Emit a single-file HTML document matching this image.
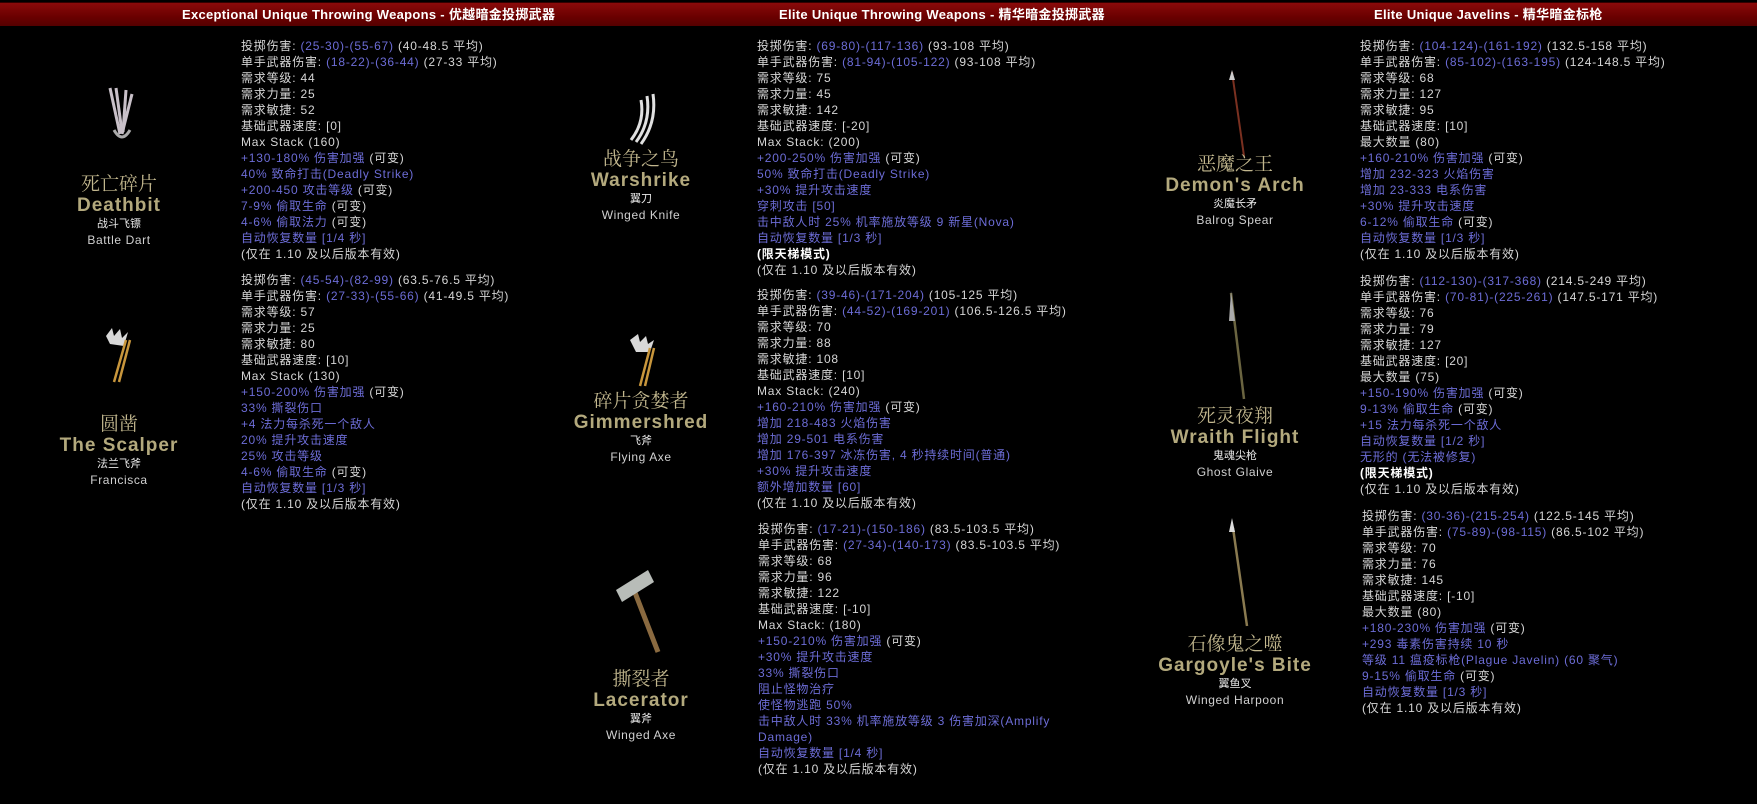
<!DOCTYPE html>
<html><head><meta charset="utf-8">
<style>
html,body{margin:0;padding:0;background:#000;width:1757px;height:804px;overflow:hidden;}
body{position:relative;font-family:"Liberation Sans","Noto Sans CJK SC",sans-serif;color:#d6d6d6;}
.hdr{position:absolute;left:0;top:2px;width:1757px;height:23px;background:linear-gradient(#8a0a0a,#6a0000 60%,#550000);border-top:1px solid #300;}
.ht{position:absolute;top:3px;height:23px;line-height:23px;color:#fff;font-weight:bold;font-size:13px;letter-spacing:0.3px;white-space:nowrap;}
.blk{position:absolute;font-size:12px;line-height:16px;letter-spacing:0.8px;white-space:nowrap;}
.b{color:#6c6cd6;}
.w{color:#fff;font-weight:bold;}
.nm{position:absolute;width:260px;text-align:center;white-space:nowrap;}
.nm .cn{font-family:"Noto Serif CJK SC","Liberation Serif",serif;font-size:19px;line-height:24px;color:#c2b78e;}
.nm .en{font-weight:bold;font-size:19px;letter-spacing:1px;line-height:22px;color:#b3a97d;}
.nm .tc{font-size:11px;line-height:14px;color:#e8e8e8;}
.nm .te{font-size:12px;letter-spacing:0.6px;line-height:18px;color:#d0d0d0;}
svg{position:absolute;}
</style></head><body>
<div class="hdr"></div>
<div class="ht" style="left:182px">Exceptional Unique Throwing Weapons - 优越暗金投掷武器</div>
<div class="ht" style="left:779px">Elite Unique Throwing Weapons - 精华暗金投掷武器</div>
<div class="ht" style="left:1374px">Elite Unique Javelins - 精华暗金标枪</div>

<!-- Column 1 -->
<svg style="left:104px;top:86px" width="32" height="58"><g stroke="#c8c0c8" stroke-width="3" fill="none"><path d="M6 2 L16 48"/><path d="M12 2 L18 46"/><path d="M28 8 L18 48"/><path d="M22 4 L19 46"/></g><path d="M10 44 Q18 58 26 44" stroke="#aaa" stroke-width="3" fill="none"/></svg>
<div class="nm" style="left:-11px;top:171px"><div class="cn">死亡碎片</div><div class="en">Deathbit</div><div class="tc">战斗飞镖</div><div class="te">Battle Dart</div></div>
<div class="blk" style="left:241px;top:38px">
投掷伤害: <span class="b">(25-30)-(55-67)</span> (40-48.5 平均)<br>
单手武器伤害: <span class="b">(18-22)-(36-44)</span> (27-33 平均)<br>
需求等级: 44<br>需求力量: 25<br>需求敏捷: 52<br>基础武器速度: [0]<br>Max Stack (160)<br>
<span class="b">+130-180% 伤害加强</span> (可变)<br>
<span class="b">40% 致命打击(Deadly Strike)</span><br>
<span class="b">+200-450 攻击等级</span> (可变)<br>
<span class="b">7-9% 偷取生命</span> (可变)<br>
<span class="b">4-6% 偷取法力</span> (可变)<br>
<span class="b">自动恢复数量 [1/4 秒]</span><br>
(仅在 1.10 及以后版本有效)</div>

<svg style="left:104px;top:326px" width="34" height="58"><path d="M2 10 L8 2 L10 10 L16 3 L18 12 L24 6 L20 20 L6 18 Z" fill="#d8d8d8"/><g stroke="#c8963c" stroke-width="2.5"><path d="M22 14 L10 56"/><path d="M26 14 L15 56"/></g></svg>
<div class="nm" style="left:-11px;top:411px"><div class="cn">圆凿</div><div class="en">The Scalper</div><div class="tc">法兰飞斧</div><div class="te">Francisca</div></div>
<div class="blk" style="left:241px;top:272px">
投掷伤害: <span class="b">(45-54)-(82-99)</span> (63.5-76.5 平均)<br>
单手武器伤害: <span class="b">(27-33)-(55-66)</span> (41-49.5 平均)<br>
需求等级: 57<br>需求力量: 25<br>需求敏捷: 80<br>基础武器速度: [10]<br>Max Stack (130)<br>
<span class="b">+150-200% 伤害加强</span> (可变)<br>
<span class="b">33% 撕裂伤口</span><br>
<span class="b">+4 法力每杀死一个敌人</span><br>
<span class="b">20% 提升攻击速度</span><br>
<span class="b">25% 攻击等级</span><br>
<span class="b">4-6% 偷取生命</span> (可变)<br>
<span class="b">自动恢复数量 [1/3 秒]</span><br>
(仅在 1.10 及以后版本有效)</div>

<!-- Column 2 -->
<svg style="left:627px;top:92px" width="34" height="56"><g stroke="#e0e0e0" stroke-width="3" fill="none"><path d="M26 2 Q30 30 14 52"/><path d="M20 4 Q24 30 9 50"/><path d="M14 8 Q18 30 4 48"/></g></svg>
<div class="nm" style="left:511px;top:146px"><div class="cn">战争之鸟</div><div class="en">Warshrike</div><div class="tc">翼刀</div><div class="te">Winged Knife</div></div>
<div class="blk" style="left:757px;top:38px">
投掷伤害: <span class="b">(69-80)-(117-136)</span> (93-108 平均)<br>
单手武器伤害: <span class="b">(81-94)-(105-122)</span> (93-108 平均)<br>
需求等级: 75<br>需求力量: 45<br>需求敏捷: 142<br>基础武器速度: [-20]<br>Max Stack: (200)<br>
<span class="b">+200-250% 伤害加强</span> (可变)<br>
<span class="b">50% 致命打击(Deadly Strike)</span><br>
<span class="b">+30% 提升攻击速度</span><br>
<span class="b">穿刺攻击 [50]</span><br>
<span class="b">击中敌人时 25% 机率施放等级 9 新星(Nova)</span><br>
<span class="b">自动恢复数量 [1/3 秒]</span><br>
<span class="w">(限天梯模式)</span><br>
(仅在 1.10 及以后版本有效)</div>

<svg style="left:628px;top:332px" width="34" height="56"><path d="M2 8 L10 2 L12 10 L18 4 L20 12 L26 8 L22 20 L8 20 Z" fill="#d8d8d8"/><g stroke="#c8963c" stroke-width="2.5"><path d="M22 16 L12 54"/><path d="M26 16 L17 54"/></g></svg>
<div class="nm" style="left:511px;top:388px"><div class="cn">碎片贪婪者</div><div class="en">Gimmershred</div><div class="tc">飞斧</div><div class="te">Flying Axe</div></div>
<div class="blk" style="left:757px;top:287px">
投掷伤害: <span class="b">(39-46)-(171-204)</span> (105-125 平均)<br>
单手武器伤害: <span class="b">(44-52)-(169-201)</span> (106.5-126.5 平均)<br>
需求等级: 70<br>需求力量: 88<br>需求敏捷: 108<br>基础武器速度: [10]<br>Max Stack: (240)<br>
<span class="b">+160-210% 伤害加强</span> (可变)<br>
<span class="b">增加 218-483 火焰伤害</span><br>
<span class="b">增加 29-501 电系伤害</span><br>
<span class="b">增加 176-397 冰冻伤害, 4 秒持续时间(普通)</span><br>
<span class="b">+30% 提升攻击速度</span><br>
<span class="b">额外增加数量 [60]</span><br>
(仅在 1.10 及以后版本有效)</div>

<svg style="left:614px;top:568px" width="60" height="90"><path d="M44 84 L20 22" stroke="#8a6a40" stroke-width="5"/><path d="M2 22 L8 34 L40 14 L34 2 Z" fill="#b8bcb8"/></svg>
<div class="nm" style="left:511px;top:666px"><div class="cn">撕裂者</div><div class="en">Lacerator</div><div class="tc">翼斧</div><div class="te">Winged Axe</div></div>
<div class="blk" style="left:758px;top:521px">
投掷伤害: <span class="b">(17-21)-(150-186)</span> (83.5-103.5 平均)<br>
单手武器伤害: <span class="b">(27-34)-(140-173)</span> (83.5-103.5 平均)<br>
需求等级: 68<br>需求力量: 96<br>需求敏捷: 122<br>基础武器速度: [-10]<br>Max Stack: (180)<br>
<span class="b">+150-210% 伤害加强</span> (可变)<br>
<span class="b">+30% 提升攻击速度</span><br>
<span class="b">33% 撕裂伤口</span><br>
<span class="b">阻止怪物治疗</span><br>
<span class="b">使怪物逃跑 50%</span><br>
<span class="b">击中敌人时 33% 机率施放等级 3 伤害加深(Amplify</span><br>
<span class="b">Damage)</span><br>
<span class="b">自动恢复数量 [1/4 秒]</span><br>
(仅在 1.10 及以后版本有效)</div>

<!-- Column 3 -->
<svg style="left:1229px;top:70px" width="20" height="90"><path d="M3 2 L15 86" stroke="#7a3020" stroke-width="2"/><path d="M3 0 L0 10 L6 10 Z" fill="#ccc"/></svg>
<div class="nm" style="left:1105px;top:151px"><div class="cn">恶魔之王</div><div class="en">Demon's Arch</div><div class="tc">炎魔长矛</div><div class="te">Balrog Spear</div></div>
<div class="blk" style="left:1360px;top:38px">
投掷伤害: <span class="b">(104-124)-(161-192)</span> (132.5-158 平均)<br>
单手武器伤害: <span class="b">(85-102)-(163-195)</span> (124-148.5 平均)<br>
需求等级: 68<br>需求力量: 127<br>需求敏捷: 95<br>基础武器速度: [10]<br>最大数量 (80)<br>
<span class="b">+160-210% 伤害加强</span> (可变)<br>
<span class="b">增加 232-323 火焰伤害</span><br>
<span class="b">增加 23-333 电系伤害</span><br>
<span class="b">+30% 提升攻击速度</span><br>
<span class="b">6-12% 偷取生命</span> (可变)<br>
<span class="b">自动恢复数量 [1/3 秒]</span><br>
(仅在 1.10 及以后版本有效)</div>

<svg style="left:1227px;top:291px" width="22" height="112"><path d="M4 2 L17 108" stroke="#6a6440" stroke-width="2.5"/><path d="M4 0 L2 30 L8 30 Z" fill="#aaa"/></svg>
<div class="nm" style="left:1105px;top:403px"><div class="cn">死灵夜翔</div><div class="en">Wraith Flight</div><div class="tc">鬼魂尖枪</div><div class="te">Ghost Glaive</div></div>
<div class="blk" style="left:1360px;top:273px">
投掷伤害: <span class="b">(112-130)-(317-368)</span> (214.5-249 平均)<br>
单手武器伤害: <span class="b">(70-81)-(225-261)</span> (147.5-171 平均)<br>
需求等级: 76<br>需求力量: 79<br>需求敏捷: 127<br>基础武器速度: [20]<br>最大数量 (75)<br>
<span class="b">+150-190% 伤害加强</span> (可变)<br>
<span class="b">9-13% 偷取生命</span> (可变)<br>
<span class="b">+15 法力每杀死一个敌人</span><br>
<span class="b">自动恢复数量 [1/2 秒]</span><br>
<span class="b">无形的 (无法被修复)</span><br>
<span class="w">(限天梯模式)</span><br>
(仅在 1.10 及以后版本有效)</div>

<svg style="left:1228px;top:518px" width="24" height="112"><path d="M5 10 L19 108" stroke="#8a7a50" stroke-width="2.5"/><path d="M4 0 L1 14 L7 14 Z" fill="#ddd"/></svg>
<div class="nm" style="left:1105px;top:631px"><div class="cn">石像鬼之噬</div><div class="en">Gargoyle's Bite</div><div class="tc">翼鱼叉</div><div class="te">Winged Harpoon</div></div>
<div class="blk" style="left:1362px;top:508px">
投掷伤害: <span class="b">(30-36)-(215-254)</span> (122.5-145 平均)<br>
单手武器伤害: <span class="b">(75-89)-(98-115)</span> (86.5-102 平均)<br>
需求等级: 70<br>需求力量: 76<br>需求敏捷: 145<br>基础武器速度: [-10]<br>最大数量 (80)<br>
<span class="b">+180-230% 伤害加强</span> (可变)<br>
<span class="b">+293 毒素伤害持续 10 秒</span><br>
<span class="b">等级 11 瘟疫标枪(Plague Javelin) (60 聚气)</span><br>
<span class="b">9-15% 偷取生命</span> (可变)<br>
<span class="b">自动恢复数量 [1/3 秒]</span><br>
(仅在 1.10 及以后版本有效)</div>
</body></html>
